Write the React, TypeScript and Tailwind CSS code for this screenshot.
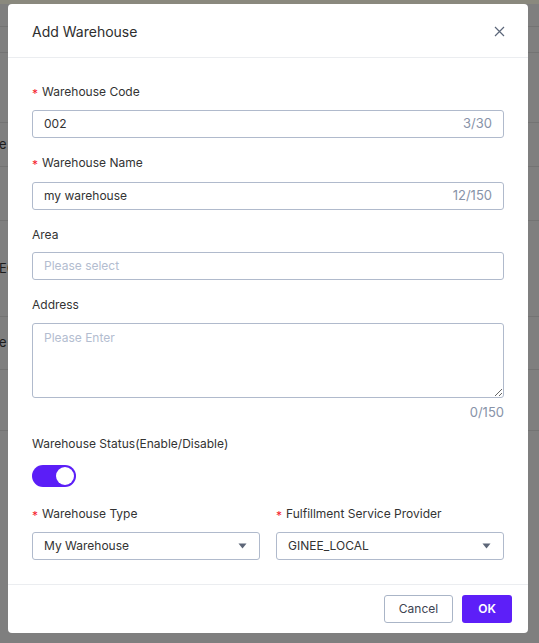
import React from "react";

const Req = () => <span className="text-[#f5222d] mr-[4px] text-[12px] leading-none relative top-[2px]">*</span>;

function Caret() {
  return (
    <svg width="9" height="6" viewBox="0 0 9 6" className="shrink-0">
      <path d="M0.5 0.5 L8.5 0.5 L4.5 5.5 Z" fill="#5d6678" />
    </svg>
  );
}

export default function App() {
  const font = { fontFamily: "Inter, 'Noto Sans', sans-serif" };
  return (
    <div className="relative w-[539px] h-[643px] overflow-hidden bg-[#7f7f7f]" style={font}>
      {/* background page under overlay */}
      <div className="flex flex-col">
        <div className="h-[4px] bg-[#8a897e]" />
        <div className="h-[23px] border-b border-[#737373]" />
        <div className="h-[26px] border-b border-[#737373]" />
        <div className="h-[70px] border-b border-[#737373]" />
        <div className="h-[44px] border-b border-[#737373] flex items-center text-[13px] text-[#1c1c1c] pl-0">
          <span className="-ml-[1px]">e I</span>
        </div>
        <div className="h-[54px] border-b border-[#737373]" />
        <div className="h-[96px] border-b border-[#737373] flex items-center text-[13px] text-[#1c1c1c]">
          <span className="-ml-[1px]">EC</span>
        </div>
        <div className="h-[53px] border-b border-[#737373] flex items-center text-[13px] text-[#1c1c1c]">
          <span className="-ml-[1px]">e</span>
        </div>
        <div className="h-[61px] border-b border-[#737373]" />
      </div>

      {/* modal */}
      <div className="absolute left-[8px] top-[4px] w-[520px] bg-white rounded-[4px] flex flex-col">
        <div className="h-[54px] border-b border-[#ebedf0] flex items-center justify-between pl-[24px] pr-[24px] pt-[2px]">
          <span className="text-[14px] text-[#2e2e2e]">Add Warehouse</span>
          <svg width="11" height="11" viewBox="0 0 11 11" className="mr-[-1px]">
            <path d="M1 1 L10 10 M10 1 L1 10" stroke="#5b6679" strokeWidth="1.2" fill="none" />
          </svg>
        </div>

        <div className="px-[24px] pt-[24px] pb-[24px] flex flex-col text-[12px] text-[#333]">
          <div className="h-[20px] flex items-center mb-[8px]"><Req />Warehouse Code</div>
          <div className="h-[28px] border border-[#b0bacc] rounded-[3px] flex items-center justify-between px-[11px]">
            <span className="text-[#333]">002</span>
            <span className="text-[#8893a8] text-[13px]">3/30</span>
          </div>

          <div className="h-[20px] flex items-center mt-[15px] mb-[9px]"><Req />Warehouse Name</div>
          <div className="h-[28px] border border-[#b0bacc] rounded-[3px] flex items-center justify-between px-[11px]">
            <span className="text-[#333]">my warehouse</span>
            <span className="text-[#8893a8] text-[13px]">12/150</span>
          </div>

          <div className="h-[20px] flex items-center mt-[15px] mb-[7px]">Area</div>
          <div className="h-[28px] border border-[#b0bacc] rounded-[3px] flex items-center px-[11px]">
            <span className="text-[#b3bdd0]">Please select</span>
          </div>

          <div className="h-[20px] flex items-center mt-[15px] mb-[8px]">Address</div>
          <textarea
            readOnly
            placeholder="Please Enter"
            className="h-[75px] w-full border border-[#b0bacc] rounded-[3px] px-[11px] py-[5px] text-[12px] outline-none placeholder:text-[#b3bdd0] block"
            style={font}
          />
          <div className="h-[20px] flex items-center justify-end mt-[5px] text-[#8893a8] text-[13px]">0/150</div>

          <div className="h-[20px] flex items-center mt-[11px]">Warehouse Status(Enable/Disable)</div>
          <div className="mt-[11px] w-[44px] h-[22px] rounded-full bg-[#5b1ef7] flex items-center justify-end px-[2px]">
            <div className="w-[18px] h-[18px] rounded-full bg-white" />
          </div>

          <div className="grid grid-cols-2 gap-x-[16px] mt-[17px]">
            <div className="flex flex-col">
              <div className="h-[20px] flex items-center mb-[8px]"><Req />Warehouse Type</div>
              <div className="h-[28px] border border-[#b0bacc] rounded-[3px] flex items-center justify-between pl-[11px] pr-[12px]">
                <span>My Warehouse</span>
                <Caret />
              </div>
            </div>
            <div className="flex flex-col">
              <div className="h-[20px] flex items-center mb-[8px]"><Req />Fulfillment Service Provider</div>
              <div className="h-[28px] border border-[#b0bacc] rounded-[3px] flex items-center justify-between pl-[11px] pr-[12px]">
                <span>GINEE_LOCAL</span>
                <Caret />
              </div>
            </div>
          </div>
        </div>

        <div className="border-t border-[#ebedf0] flex justify-end items-center gap-[9px] pt-[10px] pb-[10px] pr-[16px]">
          <button className="h-[28px] w-[69px] border border-[#aab5c7] rounded-[3px] text-[12px] text-[#3d4452] bg-white" style={font}>Cancel</button>
          <button className="h-[28px] w-[50px] rounded-[3px] text-[12px] text-white font-semibold bg-[#5d1ff8]" style={font}>OK</button>
        </div>
      </div>
    </div>
  );
}
